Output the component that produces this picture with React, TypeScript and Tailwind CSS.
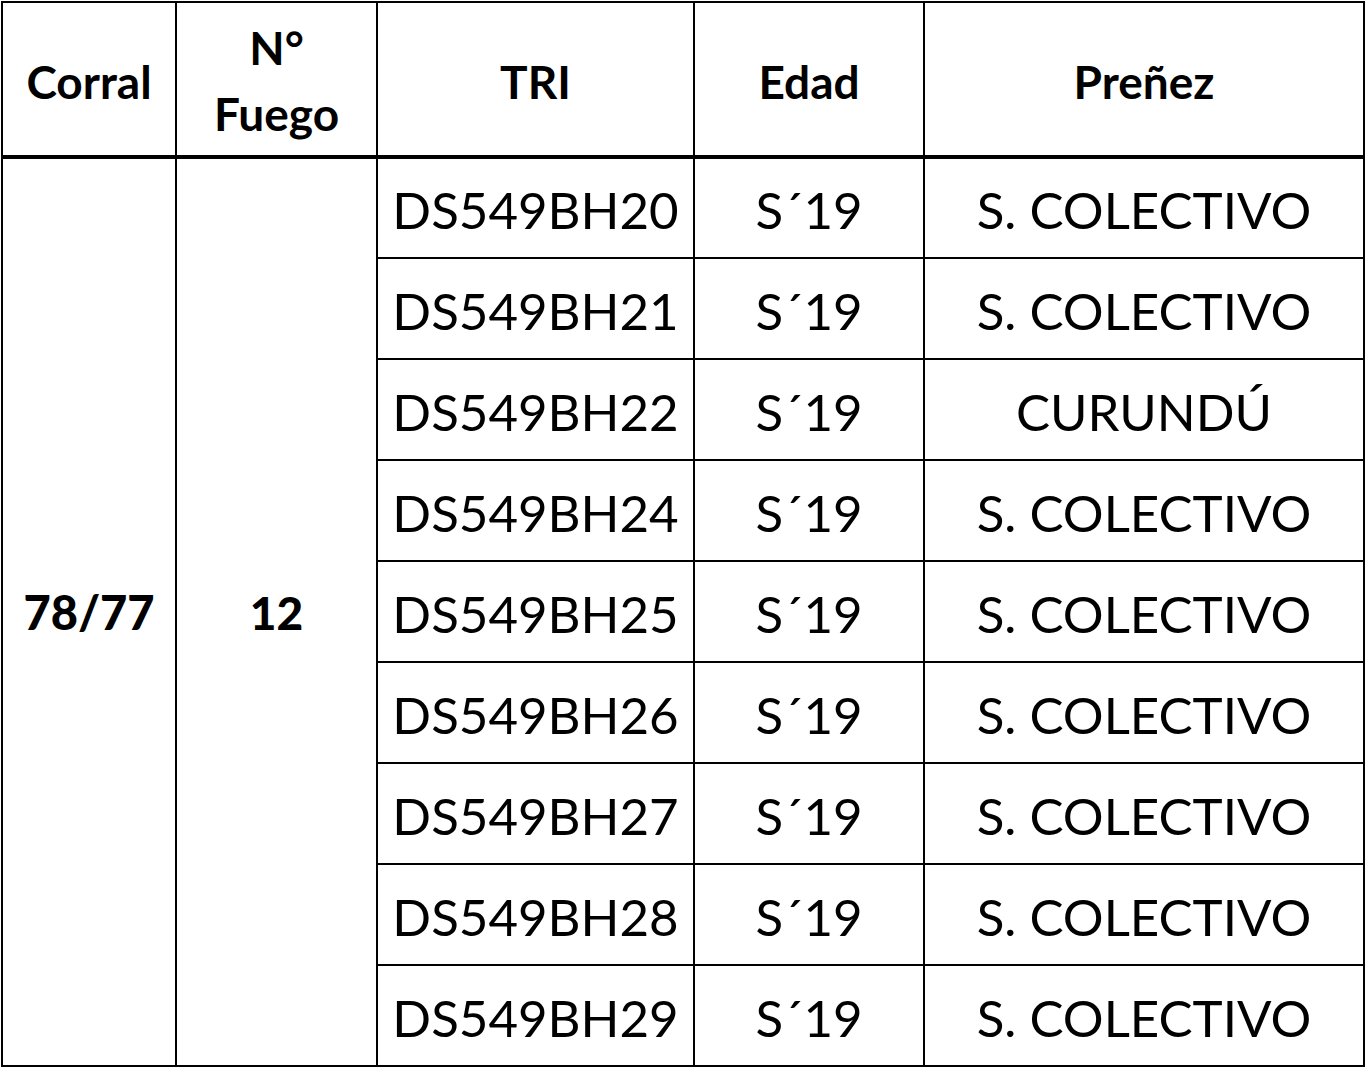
const rows = [
  ["DS549BH20", "S´19", "S. COLECTIVO"],
  ["DS549BH21", "S´19", "S. COLECTIVO"],
  ["DS549BH22", "S´19", "CURUNDÚ"],
  ["DS549BH24", "S´19", "S. COLECTIVO"],
  ["DS549BH25", "S´19", "S. COLECTIVO"],
  ["DS549BH26", "S´19", "S. COLECTIVO"],
  ["DS549BH27", "S´19", "S. COLECTIVO"],
  ["DS549BH28", "S´19", "S. COLECTIVO"],
  ["DS549BH29", "S´19", "S. COLECTIVO"],
];

export default function App() {
  return (
    <main className="bg-white w-[1365px] h-[1070px] font-['Lato',sans-serif] text-black">
      <table className="border-collapse table-fixed w-[1362px] ml-px mt-px">
        <colgroup>
          <col className="w-[174px]" />
          <col className="w-[201px]" />
          <col className="w-[317px]" />
          <col className="w-[230px]" />
          <col className="w-[440px]" />
        </colgroup>
        <thead>
          <tr className="h-[155px] border-b-4 border-black">
            <th className="border-2 border-black text-[46px] font-bold leading-[63px] pt-1">Corral</th>
            <th className="border-2 border-black text-[46px] font-bold leading-[66px] pt-1">
              N°
              <br />
              Fuego
            </th>
            <th className="border-2 border-black text-[46px] font-bold leading-[63px] pt-1">TRI</th>
            <th className="border-2 border-black text-[46px] font-bold leading-[63px] pt-1">Edad</th>
            <th className="border-2 border-black text-[46px] font-bold leading-[63px] pt-1">Preñez</th>
          </tr>
        </thead>
        <tbody>
          {rows.map((r, i) => (
            <tr key={r[0]} className="h-[101px]">
              {i === 0 && (
                <>
                  <td rowSpan={9} className="border-2 border-black text-center text-[47px] font-black">
                    78/77
                  </td>
                  <td rowSpan={9} className="border-2 border-black text-center text-[46px] font-black">
                    12
                  </td>
                </>
              )}
              <td className="border-2 border-black text-center text-[51px] pt-[5px]">{r[0]}</td>
              <td className="border-2 border-black text-center text-[51px] pt-[5px]">{r[1]}</td>
              <td className="border-2 border-black text-center text-[51px] pt-[5px]">{r[2]}</td>
            </tr>
          ))}
        </tbody>
      </table>
    </main>
  );
}
